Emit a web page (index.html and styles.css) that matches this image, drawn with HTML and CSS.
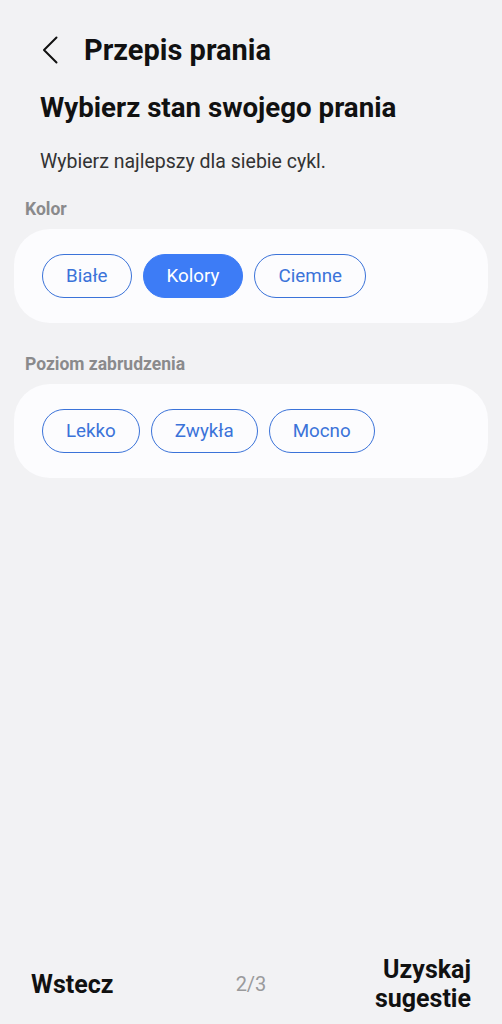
FILE: index.html
```html
<!DOCTYPE html>
<html>
<head>
    <title>Przepis prania</title>
    <link rel="stylesheet" href="styles.css">
</head>
<body>
    <div class="screen">
        <!-- Top bar -->
        <div class="top-bar">
            <div class="back-button">
                <svg width="16" height="28" viewBox="0 0 16 28">
                    <path d="M14.5 1.5 L2 14 L14.5 26.5" fill="none" stroke="#111" stroke-width="2" stroke-linecap="round" stroke-linejoin="round"/>
                </svg>
            </div>
            <h1 class="page-title">Przepis prania</h1>
        </div>

        <div class="content">
            <h2 class="heading">Wybierz stan swojego prania</h2>
            <p class="subtitle">Wybierz najlepszy dla siebie cykl.</p>

            <div class="section-label">Kolor</div>
            <div class="card">
                <button class="chip">Białe</button>
                <button class="chip selected">Kolory</button>
                <button class="chip">Ciemne</button>
            </div>

            <div class="section-label">Poziom zabrudzenia</div>
            <div class="card">
                <button class="chip">Lekko</button>
                <button class="chip">Zwykła</button>
                <button class="chip">Mocno</button>
            </div>
        </div>

        <!-- Bottom navigation -->
        <div class="bottom-bar">
            <div class="nav-button">Wstecz</div>
            <div class="step">2/3</div>
            <div class="nav-button right">Uzyskaj<br>sugestie</div>
        </div>
    </div>
</body>
</html>
```

FILE: styles.css
```css
body {
    margin: 0;
    background-color: #f2f2f4;
    font-family: Roboto, "Noto Sans", sans-serif;
    color: #111;
}

.screen {
    height: 1024px;
    display: flex;
    flex-direction: column;
}

.top-bar {
    display: flex;
    align-items: center;
    height: 52px;
    padding: 24px 0 0 42px;
}

.back-button {
    width: 42px;
    display: flex;
    align-items: center;
}

.page-title {
    margin: 0;
    font-size: 29px;
    font-weight: 700;
}

.content {
    flex: 1;
    padding: 0 14px;
}

.heading {
    margin: 15px 0 0 26px;
    font-size: 27.7px;
    font-weight: 700;
}

.subtitle {
    margin: 26px 0 0 26px;
    font-size: 19.5px;
    color: #333;
}

.section-label {
    margin: 26px 0 10px 11px;
    font-size: 17.5px;
    font-weight: 700;
    color: #8a8a8c;
}

.card + .section-label {
    margin-top: 31px;
}

.card {
    background-color: #fcfcfe;
    border-radius: 36px;
    padding: 25px 28px;
    display: flex;
    gap: 11px;
}

/* Pill shaped options */
.chip {
    font-family: inherit;
    font-size: 18.8px;
    color: #3b73d9;
    background: transparent;
    border: 1.5px solid #3b73d9;
    border-radius: 22px;
    height: 44px;
    padding: 0 23px;
}

.chip.selected {
    background-color: #3d7cf6;
    border-color: #3d7cf6;
    color: #fff;
}

.bottom-bar {
    display: flex;
    align-items: center;
    justify-content: space-between;
    height: 80px;
    padding: 0 31px 0 31px;
}

.nav-button {
    font-size: 25px;
    font-weight: 700;
    line-height: 29px;
    width: 130px;
}

.nav-button.right {
    text-align: right;
}

.step {
    font-size: 20px;
    color: #9a9a9c;
}
```
